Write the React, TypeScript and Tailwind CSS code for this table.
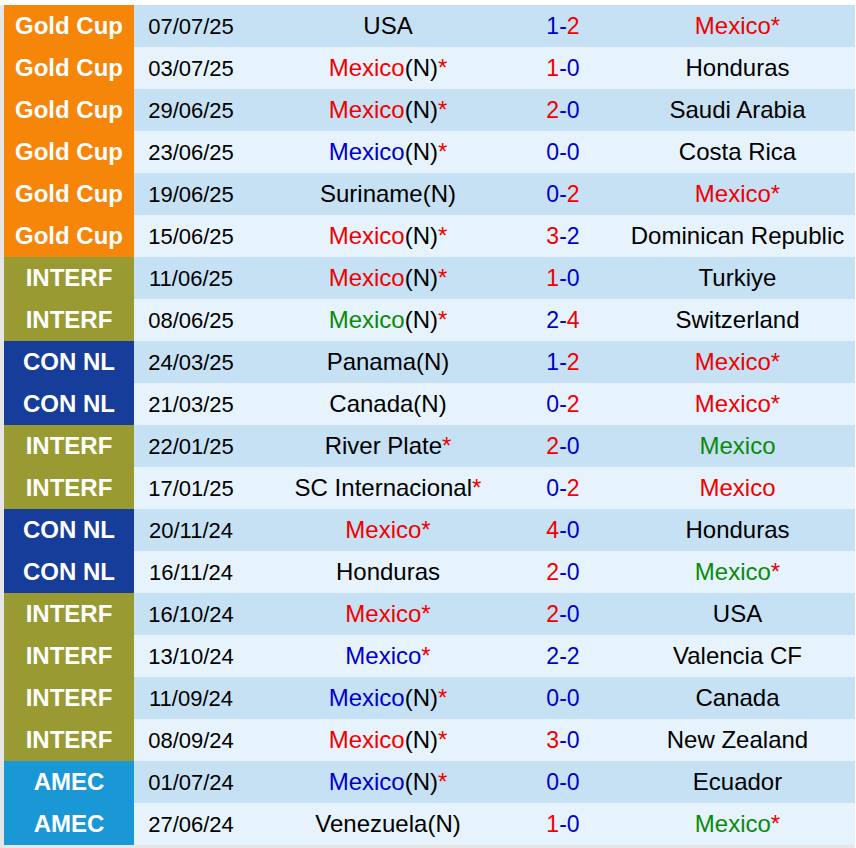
import React from "react";

type Part = { t: string; c?: "r" | "b" | "g" | "k" };
type Row = {
  comp: "gold" | "interf" | "connl" | "amec";
  date: string;
  home: Part[];
  score: [string, string];
  away: Part[];
};

const compStyle: Record<Row["comp"], { label: string; bg: string }> = {
  gold: { label: "Gold Cup", bg: "bg-[#f5860a]" },
  interf: { label: "INTERF", bg: "bg-[#9a9a33]" },
  connl: { label: "CON NL", bg: "bg-[#153d99]" },
  amec: { label: "AMEC", bg: "bg-[#1a98d6]" },
};

const colorCls = {
  r: "text-[#f00000]",
  b: "text-[#0000c8]",
  g: "text-[#0a8a0a]",
  k: "text-black",
};

const star: Part = { t: "*", c: "r" };
const n: Part = { t: "(N)", c: "k" };

const rows: Row[] = [
  { comp: "gold", date: "07/07/25", home: [{ t: "USA" }], score: ["1", "2"], away: [{ t: "Mexico", c: "r" }, star] },
  { comp: "gold", date: "03/07/25", home: [{ t: "Mexico", c: "r" }, n, star], score: ["1", "0"], away: [{ t: "Honduras" }] },
  { comp: "gold", date: "29/06/25", home: [{ t: "Mexico", c: "r" }, n, star], score: ["2", "0"], away: [{ t: "Saudi Arabia" }] },
  { comp: "gold", date: "23/06/25", home: [{ t: "Mexico", c: "b" }, n, star], score: ["0", "0"], away: [{ t: "Costa Rica" }] },
  { comp: "gold", date: "19/06/25", home: [{ t: "Suriname(N)" }], score: ["0", "2"], away: [{ t: "Mexico", c: "r" }, star] },
  { comp: "gold", date: "15/06/25", home: [{ t: "Mexico", c: "r" }, n, star], score: ["3", "2"], away: [{ t: "Dominican Republic" }] },
  { comp: "interf", date: "11/06/25", home: [{ t: "Mexico", c: "r" }, n, star], score: ["1", "0"], away: [{ t: "Turkiye" }] },
  { comp: "interf", date: "08/06/25", home: [{ t: "Mexico", c: "g" }, n, star], score: ["2", "4"], away: [{ t: "Switzerland" }] },
  { comp: "connl", date: "24/03/25", home: [{ t: "Panama(N)" }], score: ["1", "2"], away: [{ t: "Mexico", c: "r" }, star] },
  { comp: "connl", date: "21/03/25", home: [{ t: "Canada(N)" }], score: ["0", "2"], away: [{ t: "Mexico", c: "r" }, star] },
  { comp: "interf", date: "22/01/25", home: [{ t: "River Plate" }, star], score: ["2", "0"], away: [{ t: "Mexico", c: "g" }] },
  { comp: "interf", date: "17/01/25", home: [{ t: "SC Internacional" }, star], score: ["0", "2"], away: [{ t: "Mexico", c: "r" }] },
  { comp: "connl", date: "20/11/24", home: [{ t: "Mexico", c: "r" }, star], score: ["4", "0"], away: [{ t: "Honduras" }] },
  { comp: "connl", date: "16/11/24", home: [{ t: "Honduras" }], score: ["2", "0"], away: [{ t: "Mexico", c: "g" }, star] },
  { comp: "interf", date: "16/10/24", home: [{ t: "Mexico", c: "r" }, star], score: ["2", "0"], away: [{ t: "USA" }] },
  { comp: "interf", date: "13/10/24", home: [{ t: "Mexico", c: "b" }, star], score: ["2", "2"], away: [{ t: "Valencia CF" }] },
  { comp: "interf", date: "11/09/24", home: [{ t: "Mexico", c: "b" }, n, star], score: ["0", "0"], away: [{ t: "Canada" }] },
  { comp: "interf", date: "08/09/24", home: [{ t: "Mexico", c: "r" }, n, star], score: ["3", "0"], away: [{ t: "New Zealand" }] },
  { comp: "amec", date: "01/07/24", home: [{ t: "Mexico", c: "b" }, n, star], score: ["0", "0"], away: [{ t: "Ecuador" }] },
  { comp: "amec", date: "27/06/24", home: [{ t: "Venezuela(N)" }], score: ["1", "0"], away: [{ t: "Mexico", c: "g" }, star] },
];

function Team({ parts }: { parts: Part[] }) {
  return (
    <>
      {parts.map((p, i) => (
        <span key={i} className={colorCls[p.c ?? "k"]}>
          {p.t}
        </span>
      ))}
    </>
  );
}

function Score({ score }: { score: [string, string] }) {
  const h = parseInt(score[0]);
  const a = parseInt(score[1]);
  return (
    <>
      <span className={h > a ? colorCls.r : colorCls.b}>{score[0]}</span>
      <span className={colorCls.b}>-</span>
      <span className={a > h ? colorCls.r : colorCls.b}>{score[1]}</span>
    </>
  );
}

export default function App() {
  return (
    <div
      className="w-[856px] h-[848px] bg-white pt-[5px] pr-[1px]"
      style={{ fontFamily: '"Liberation Sans", Arial, sans-serif' }}
    >
      <div className="border-l-4 border-b-[3px] border-[#e6e6e6]">
        {rows.map((r, i) => {
          const cs = compStyle[r.comp];
          const rowBg = i % 2 === 0 ? "bg-[#c6e1f4]" : "bg-[#e6f3fc]";
          return (
            <div key={i} className={`grid grid-cols-[130px_114px_280px_70px_1fr] h-[42px] items-center ${rowBg}`}>
              <div className={`h-full flex items-center justify-center text-white font-bold text-[24px] ${cs.bg}`}>
                {cs.label}
              </div>
              <div className="text-center text-[22px] text-black">{r.date}</div>
              <div className="text-center text-[24px] whitespace-nowrap">
                <Team parts={r.home} />
              </div>
              <div className="text-center text-[23px]">
                <Score score={r.score} />
              </div>
              <div className="text-center text-[24px] pl-[22px] whitespace-nowrap">
                <Team parts={r.away} />
              </div>
            </div>
          );
        })}
      </div>
    </div>
  );
}
